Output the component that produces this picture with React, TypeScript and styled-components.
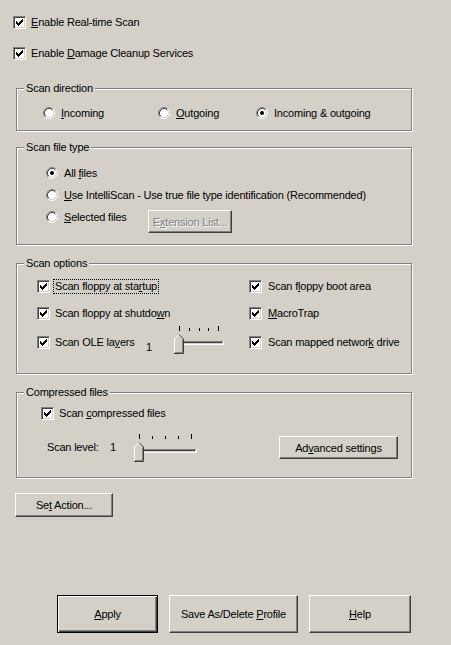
import React from 'react';
import styled, { createGlobalStyle } from 'styled-components';

const GlobalStyle = createGlobalStyle`
  html, body {
    margin: 0;
    padding: 0;
    background: #d4d0c8;
  }
  body {
    font-family: "Liberation Sans", Arial, sans-serif;
    font-size: 11px;
    letter-spacing: -0.2px;
    color: #000;
  }
`;

const Page = styled.div`
  width: 451px;
  height: 645px;
  box-sizing: border-box;
  padding: 16px 0 12px 13px;
  display: flex;
  flex-direction: column;
`;

const TopChecks = styled.div`
  display: flex;
  flex-direction: column;
  gap: 18px;
`;

const Item = styled.label<{ $width?: number; $gap?: number }>`
  display: flex;
  align-items: center;
  gap: ${(p) => p.$gap ?? 5}px;
  height: 13px;
  line-height: 13px;
  white-space: nowrap;
  flex: none;
  width: ${(p) => (p.$width ? `${p.$width}px` : 'auto')};
`;

const RadioItem = styled(Item)`
  gap: 6px;
  height: 14px;
  line-height: 14px;
`;

const Focus = styled.span`
  outline: 1px dotted #000;
  padding: 0 1px;
  margin-left: -1px;
`;

const Group = styled.section<{ $top: number; $pad: string }>`
  position: relative;
  margin: ${(p) => p.$top}px 0 0 3px;
  width: 396px;
  box-sizing: border-box;
  border: 1px solid #808080;
  box-shadow: inset 1px 1px 0 #fff, 1px 1px 0 #fff;
  padding: ${(p) => p.$pad};
`;

const Legend = styled.span`
  position: absolute;
  top: -7px;
  left: 7px;
  padding: 0 2px;
  line-height: 13px;
  background: #d4d0c8;
`;

const DirectionRow = styled.div`
  display: grid;
  grid-template-columns: 115px 98px auto;
`;

const FileTypeList = styled.div`
  display: flex;
  flex-direction: column;
  gap: 8px;
`;

const FileRow = styled.div`
  display: flex;
  align-items: flex-start;
`;

const OptionsGrid = styled.div`
  display: grid;
  grid-template-columns: 212px auto;
  grid-template-rows: 27px 29px 13px;
  align-items: start;
`;

const Cell = styled.div`
  display: flex;
  align-items: center;
  height: 13px;
`;

const Value = styled.span<{ $width: number; $shift?: number }>`
  width: ${(p) => p.$width}px;
  flex: none;
  line-height: 13px;
  margin-top: ${(p) => p.$shift ?? 0}px;
`;

const LevelRow = styled.div`
  display: flex;
  align-items: center;
  height: 23px;
  margin-top: 16px;
  padding-left: 6px;
`;

const Button = styled.button<{ $w: number; $h: number; $default?: boolean }>`
  width: ${(p) => p.$w}px;
  height: ${(p) => p.$h}px;
  flex: none;
  box-sizing: border-box;
  margin: 0;
  padding: 0;
  font: inherit;
  letter-spacing: inherit;
  color: #000;
  background: #d4d0c8;
  border: 1px solid;
  border-color: #fff #404040 #404040 #fff;
  box-shadow: inset -1px -1px 0 #808080, inset 1px 1px 0 #d4d0c8;
  ${(p) =>
    p.$default &&
    `
    border-color: #000;
    box-shadow: inset 1px 1px 0 #fff, inset -1px -1px 0 #404040, inset -2px -2px 0 #808080;
  `}
  &:disabled {
    color: #808080;
    text-shadow: 1px 1px 0 #fff;
  }
`;

const PushRight = styled.div`
  margin-left: auto;
`;

const SetActionWrap = styled.div`
  margin: 15px 0 0 2px;
`;

const ButtonBar = styled.div`
  margin-top: auto;
  padding-left: 44px;
  display: flex;
  gap: 11px;
`;

const BoxFrame = styled.span`
  width: 13px;
  height: 13px;
  flex: none;
  box-sizing: border-box;
  border: 1px solid;
  border-color: #808080 #fff #fff #808080;
  box-shadow: inset 1px 1px 0 #404040, inset -1px -1px 0 #d4d0c8;
  background: #fff;
  display: block;
  position: relative;
`;

const CHECK_PIXELS: [number, number][] = [
  [6, 0],
  [5, 1], [6, 1],
  [0, 2], [4, 2], [5, 2], [6, 2],
  [0, 3], [1, 3], [3, 3], [4, 3], [5, 3],
  [0, 4], [1, 4], [2, 4], [3, 4], [4, 4],
  [1, 5], [2, 5], [3, 5],
  [2, 6],
];

const checkPath = CHECK_PIXELS.map(([x, y]) => `M${x + 2} ${y + 2}h1v1h-1z`).join('');

function CheckBox() {
  return (
    <BoxFrame>
      <svg width="11" height="11" viewBox="0 0 11 11" style={{ position: 'absolute', left: 0, top: 0 }}>
        <path d={checkPath} fill="#000" />
      </svg>
    </BoxFrame>
  );
}

function Radio({ checked }: { checked?: boolean }) {
  return (
    <svg width="12" height="12" viewBox="0 0 12 12" style={{ flex: 'none' }}>
      <circle cx="6" cy="6" r="4.5" fill="#fff" />
      <path d="M2.11 9.89A5.5 5.5 0 0 1 9.89 2.11" fill="none" stroke="#808080" />
      <path d="M9.89 2.11A5.5 5.5 0 0 1 2.11 9.89" fill="none" stroke="#fff" />
      <path d="M2.82 9.18A4.5 4.5 0 0 1 9.18 2.82" fill="none" stroke="#404040" />
      <path d="M9.18 2.82A4.5 4.5 0 0 1 2.82 9.18" fill="none" stroke="#d4d0c8" />
      {checked && <circle cx="6" cy="6" r="2" fill="#000" />}
    </svg>
  );
}

function Slider({ spacing, shift = 0 }: { spacing: number; shift?: number }) {
  const ticks = [0, 1, 2, 3, 4].map((i) => Math.round(7 + i * spacing));
  const w = ticks[4] + 6;
  return (
    <svg width={w} height="30" viewBox={`0 0 ${w} 30`} style={{ flex: 'none', marginTop: shift }}>
      {ticks.map((x, i) => (
        <path key={x} d={`M${x + 0.5} ${i === 0 || i === 4 ? 2 : 4}V7`} stroke="#000" />
      ))}
      <path d={`M2 17.5H${w - 1}`} stroke="#808080" />
      <path d={`M3 18.5H${w - 2}`} stroke="#404040" />
      <path d={`M2 20.5H${w}`} stroke="#fff" />
      <path d={`M${w - 0.5} 17V21`} stroke="#fff" />
      <path d="M2 15L7 10L12 15V30H2Z" fill="#d4d0c8" />
      <path d="M2.5 30V15L7 10.5" fill="none" stroke="#fff" />
      <path d="M7 10.5L11.5 15V29.5H2" fill="none" stroke="#404040" />
      <path d="M10.5 15.5V28.5H3" fill="none" stroke="#808080" />
    </svg>
  );
}

export default function App() {
  return (
    <>
      <GlobalStyle />
      <Page>
        <TopChecks>
          <Item>
            <CheckBox />
            <span><u>E</u>nable Real-time Scan</span>
          </Item>
          <Item>
            <CheckBox />
            <span>Enable <u>D</u>amage Cleanup Services</span>
          </Item>
        </TopChecks>

        <Group $top={28} $pad="17px 0 10px 26px">
          <Legend>Scan direction</Legend>
          <DirectionRow>
            <RadioItem>
              <Radio />
              <span><u>I</u>ncoming</span>
            </RadioItem>
            <RadioItem>
              <Radio />
              <span><u>O</u>utgoing</span>
            </RadioItem>
            <RadioItem>
              <Radio checked />
              <span>Incoming &amp; outgoing</span>
            </RadioItem>
          </DirectionRow>
        </Group>

        <Group $top={16} $pad="18px 0 11px 29px">
          <Legend>Scan file type</Legend>
          <FileTypeList>
            <RadioItem>
              <Radio checked />
              <span>All <u>f</u>iles</span>
            </RadioItem>
            <RadioItem>
              <Radio />
              <span><u>U</u>se IntelliScan - Use true file type identification (Recommended)</span>
            </RadioItem>
            <FileRow>
              <RadioItem $width={102}>
                <Radio />
                <span><u>S</u>elected files</span>
              </RadioItem>
              <Button $w={84} $h={23} disabled>
                E<u>x</u>tension List...
              </Button>
            </FileRow>
          </FileTypeList>
        </Group>

        <Group $top={18} $pad="16px 0 24px 20px">
          <Legend>Scan options</Legend>
          <OptionsGrid>
            <Cell>
              <Item>
                <CheckBox />
                <Focus>Scan floppy at sta<u>r</u>tup</Focus>
              </Item>
            </Cell>
            <Cell>
              <Item $gap={6}>
                <CheckBox />
                <span>Scan f<u>l</u>oppy boot area</span>
              </Item>
            </Cell>
            <Cell>
              <Item>
                <CheckBox />
                <span>Scan floppy at shutdo<u>w</u>n</span>
              </Item>
            </Cell>
            <Cell>
              <Item $gap={6}>
                <CheckBox />
                <span><u>M</u>acroTrap</span>
              </Item>
            </Cell>
            <Cell>
              <Item $width={109}>
                <CheckBox />
                <span>Scan OLE la<u>y</u>ers</span>
              </Item>
              <Value $width={26} $shift={10}>1</Value>
              <Slider spacing={9.75} shift={-8} />
            </Cell>
            <Cell>
              <Item $gap={6}>
                <CheckBox />
                <span>Scan mapped networ<u>k</u> drive</span>
              </Item>
            </Cell>
          </OptionsGrid>
        </Group>

        <Group $top={18} $pad="14px 13px 18px 24px">
          <Legend>Compressed files</Legend>
          <Item>
            <CheckBox />
            <span>Scan <u>c</u>ompressed files</span>
          </Item>
          <LevelRow>
            <Value $width={63}>Scan level:</Value>
            <Value $width={22}>1</Value>
            <Slider spacing={13} shift={-2} />
            <PushRight>
              <Button $w={119} $h={23}>
                Ad<u>v</u>anced settings
              </Button>
            </PushRight>
          </LevelRow>
        </Group>

        <SetActionWrap>
          <Button $w={98} $h={24}>
            Se<u>t</u> Action...
          </Button>
        </SetActionWrap>

        <ButtonBar>
          <Button $w={101} $h={38} $default>
            <u>A</u>pply
          </Button>
          <Button $w={129} $h={38}>
            Save As/Delete <u>P</u>rofile
          </Button>
          <Button $w={102} $h={38}>
            <u>H</u>elp
          </Button>
        </ButtonBar>
      </Page>
    </>
  );
}
